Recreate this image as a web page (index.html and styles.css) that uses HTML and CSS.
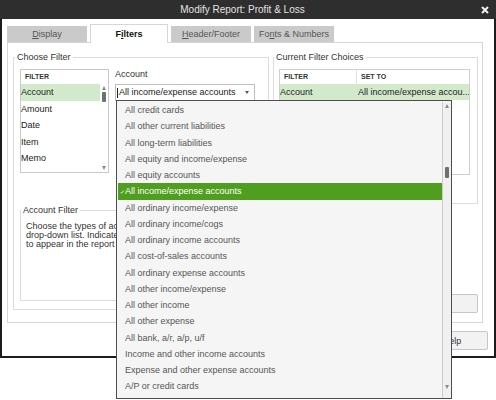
FILE: index.html
```html
<!DOCTYPE html>
<html lang="en">
<head>
    <meta charset="UTF-8">
    <title>Modify Report: Profit &amp; Loss</title>
    <link rel="stylesheet" href="styles.css">
</head>
<body>

<div class="window">
    <div class="titlebar">
        <span class="title">Modify Report: Profit &amp; Loss</span>
        <span class="close">
            <svg width="8" height="8" viewBox="0 0 8 8">
                <path d="M1 1 L7 7 M7 1 L1 7" stroke="#f0f0f0" stroke-width="2"/>
            </svg>
        </span>
    </div>

    <div class="window-body">
        <div class="tabs">
            <div class="tab"><u>D</u>isplay</div>
            <div class="tab active">F<u>i</u>lters</div>
            <div class="tab"><u>H</u>eader/Footer</div>
            <div class="tab">Fo<u>n</u>ts &amp; Numbers</div>
        </div>

        <div class="panel">
            <div class="group choose">
                <div class="group-label">Choose Filter</div>
                <div class="choose-top">
                    <div class="listbox">
                        <div class="list-head">FILTER</div>
                        <div class="list-body">
                            <div class="list-rows">
                                <div class="list-row selected">Account</div>
                                <div class="list-row">Amount</div>
                                <div class="list-row">Date</div>
                                <div class="list-row">Item</div>
                                <div class="list-row">Memo</div>
                            </div>
                            <div class="vscroll">
                                <span class="arrow-up"></span>
                                <span class="thumb small"></span>
                                <span class="arrow-down"></span>
                            </div>
                        </div>
                    </div>

                    <div class="account-field">
                        <div class="field-label">Account</div>
                        <div class="combo">
                            <span class="caret"></span>All income/expense accounts
                            <span class="combo-arrow"></span>

                            <div class="dropdown">
                                <div class="dropdown-items">
                                    <div class="item">All credit cards</div>
                                    <div class="item">All other current liabilities</div>
                                    <div class="item">All long-term liabilities</div>
                                    <div class="item">All equity and income/expense</div>
                                    <div class="item">All equity accounts</div>
                                    <div class="item selected"><span class="check">&#x2713;</span>All income/expense accounts</div>
                                    <div class="item">All ordinary income/expense</div>
                                    <div class="item">All ordinary income/cogs</div>
                                    <div class="item">All ordinary income accounts</div>
                                    <div class="item">All cost-of-sales accounts</div>
                                    <div class="item">All ordinary expense accounts</div>
                                    <div class="item">All other income/expense</div>
                                    <div class="item">All other income</div>
                                    <div class="item">All other expense</div>
                                    <div class="item">All bank, a/r, a/p, u/f</div>
                                    <div class="item">Income and other income accounts</div>
                                    <div class="item">Expense and other expense accounts</div>
                                    <div class="item">A/P or credit cards</div>
                                </div>
                                <div class="vscroll popup-scroll">
                                    <span class="arrow-up"></span>
                                    <span class="thumb"></span>
                                    <span class="arrow-down"></span>
                                </div>
                            </div>
                        </div>
                    </div>
                </div>

                <div class="group account-filter">
                    <div class="group-label">Account Filter</div>
                    <p class="help-text">
                        Choose the types of accounts you want from the<br>
                        drop-down list. Indicate whether or not you want split detail<br>
                        to appear in the report (Balance Sheet accounts only).
                    </p>
                </div>
            </div>

            <div class="right-col">
                <div class="group current">
                    <div class="group-label">Current Filter Choices</div>
                    <div class="choices">
                        <div class="choices-head">
                            <span class="col-filter">FILTER</span>
                            <span class="col-set">SET TO</span>
                        </div>
                        <div class="choices-row">
                            <span class="col-filter">Account</span>
                            <span class="col-set"><span class="caret"></span>All income/expense accou...</span>
                        </div>
                    </div>
                </div>
                <button class="btn remove">Remove Selected Filter</button>
            </div>
        </div>

        <div class="buttons">
            <button class="btn">OK</button>
            <button class="btn">Cancel</button>
            <button class="btn help">Help</button>
        </div>
    </div>
</div>

</body>
</html>
```

FILE: styles.css
```css
* {
    box-sizing: border-box;
}

html,
body {
    min-height: 400px;
}

body {
    margin: 0;
    background-color: #fff;
    font-family: "Liberation Sans", Arial, sans-serif;
    font-size: 9px;
    color: #333;
}

.window {
    width: 496px;
}

.titlebar {
    height: 19px;
    background-color: #2e2e2e;
    color: #e2e2e2;
    font-size: 10px;
    display: flex;
    align-items: center;
    padding-left: 8px;
}

.title {
    flex: 1;
    text-align: center;
}

.close {
    width: 16px;
    margin-right: 3px;
    display: flex;
    justify-content: center;
}

.window-body {
    height: 339px;
    border: 2px solid #1c1c1c;
    border-top: none;
    padding: 5px 0 0 5px;
}

/* tabs */
.tabs {
    display: flex;
    align-items: flex-end;
    gap: 3px;
    height: 18px;
}

.tab {
    width: 80px;
    height: 16px;
    line-height: 16px;
    text-align: center;
    background-color: #cacaca;
    color: #555;
}

.tab.active {
    position: relative;
    z-index: 1;
    width: 78px;
    height: 19px;
    line-height: 18px;
    margin-bottom: -1px;
    background-color: #fff;
    border: 1px solid #d6d6d6;
    border-bottom: none;
    font-weight: bold;
    color: #111;
}

.panel {
    width: 476px;
    height: 281px;
    border: 1px solid #d6d6d6;
    padding: 14px 4px 0 5px;
    display: flex;
    align-items: flex-start;
    gap: 4px;
}

/* group boxes: the label sits on the top border */
.group {
    border: 1px solid #dcdcdc;
}

.group-label {
    display: table;
    height: 11px;
    line-height: 11px;
    margin: -6px 0 0 -5px;
    padding: 0 2px;
    background-color: #fff;
    color: #333;
}

.choose {
    width: 256px;
    height: 253px;
    padding: 0 6px;
}

.choose-top {
    display: flex;
    gap: 6px;
    margin-top: 6px;
}

.listbox {
    width: 89px;
    height: 104px;
    border: 1px solid #c9c9c9;
    background-color: #fff;
    display: flex;
    flex-direction: column;
}

.list-head {
    height: 14px;
    line-height: 14px;
    padding-left: 4px;
    font-size: 7px;
    font-weight: bold;
    color: #333;
}

.list-body {
    flex: 1;
    display: flex;
}

.list-rows {
    flex: 1;
}

.list-row {
    height: 16.5px;
    line-height: 16.5px;
    color: #222;
}

.list-row.selected {
    background-color: #d2e9cc;
}

/* scrollbars */
.vscroll {
    width: 8px;
    display: flex;
    flex-direction: column;
    align-items: center;
    padding: 2px 0;
}

.arrow-up,
.arrow-down {
    width: 0;
    height: 0;
    border-left: 2.5px solid transparent;
    border-right: 2.5px solid transparent;
}

.arrow-up {
    border-bottom: 4px solid #8a8a8a;
}

.arrow-down {
    margin-top: auto;
    border-top: 4px solid #8a8a8a;
}

.thumb {
    width: 4px;
    height: 11px;
    margin-top: 59px;
    background-color: #6f6f6f;
    border-radius: 1px;
}

.thumb.small {
    height: 10px;
    margin-top: 2px;
}

/* account combo */
.account-field {
    width: 140px;
}

.field-label {
    height: 11px;
    line-height: 11px;
    margin-bottom: 4px;
    color: #333;
}

.combo {
    position: relative;
    height: 17px;
    border: 1px solid #bdbdbd;
    background-color: #fff;
    line-height: 15px;
    padding-left: 1px;
    color: #222;
    display: flex;
    align-items: center;
}

.caret {
    display: inline-block;
    width: 1px;
    height: 10px;
    margin-right: 1px;
    background-color: #222;
}

.combo-arrow {
    margin-left: auto;
    margin-right: 5px;
    width: 0;
    height: 0;
    border-left: 2.5px solid transparent;
    border-right: 2.5px solid transparent;
    border-top: 3px solid #555;
}

.dropdown {
    position: absolute;
    left: 0;
    top: 15px;
    z-index: 10;
    width: 336px;
    height: 299px;
    border: 1px solid #4d4d4d;
    background-color: #f5f5f5;
    padding: 1px 0 0 1px;
    display: flex;
    line-height: normal;
}

.dropdown-items {
    width: 324px;
}

.item {
    height: 16.25px;
    line-height: 16.25px;
    padding-left: 7px;
    color: #555;
    white-space: nowrap;
}

.item.selected {
    background-color: #509e1e;
    color: #fff;
}

.check {
    display: inline-block;
    width: 0;
    margin-left: -5px;
    margin-right: 5px;
    font-size: 6px;
}

.popup-scroll {
    width: 9px;
    border-left: 1px solid #cbcbcb;
    background-color: #f0f0f0;
    padding: 2px 0 9px;
}

.account-filter {
    width: 241px;
    height: 91px;
    margin-top: 37px;
    padding: 0 5px;
}

.account-filter .group-label {
    margin-left: -5px;
}

.help-text {
    margin: 0;
    padding-top: 6px;
    line-height: 9px;
    white-space: nowrap;
    color: #333;
}

/* right column */
.right-col {
    display: flex;
    flex-direction: column;
    align-items: flex-end;
}

.current {
    width: 205px;
    height: 147px;
    padding: 0 5px;
}

.choices {
    width: 191px;
    height: 106px;
    margin-top: 6px;
    border: 1px solid #cfcfcf;
    background-color: #fff;
}

.choices-head,
.choices-row {
    display: flex;
}

.choices-head {
    height: 14px;
    line-height: 14px;
    font-size: 7px;
    font-weight: bold;
}

.choices-head .col-filter {
    border-right: 1px solid #e0e0e0;
    padding-left: 4px;
}

.choices-head .col-set {
    padding-left: 4px;
}

.col-filter {
    width: 77px;
}

.col-set {
    flex: 1;
    white-space: nowrap;
    overflow: hidden;
}

.choices-row {
    height: 16px;
    line-height: 16px;
    background-color: #d2e9cc;
    color: #222;
}

.choices-row .col-set {
    display: flex;
    align-items: center;
}

.btn {
    height: 19px;
    border: 1px solid #c6c6c6;
    border-radius: 2px;
    background-color: #f2f2f2;
    font-family: "Liberation Sans", Arial, sans-serif;
    font-size: 9px;
    color: #333;
    padding: 0;
}

.remove {
    width: 150px;
    margin-top: 90px;
}

.buttons {
    display: flex;
    justify-content: flex-end;
    gap: 6px;
    margin-top: 8px;
    padding-right: 6px;
}

.buttons .btn {
    width: 72px;
}
```
